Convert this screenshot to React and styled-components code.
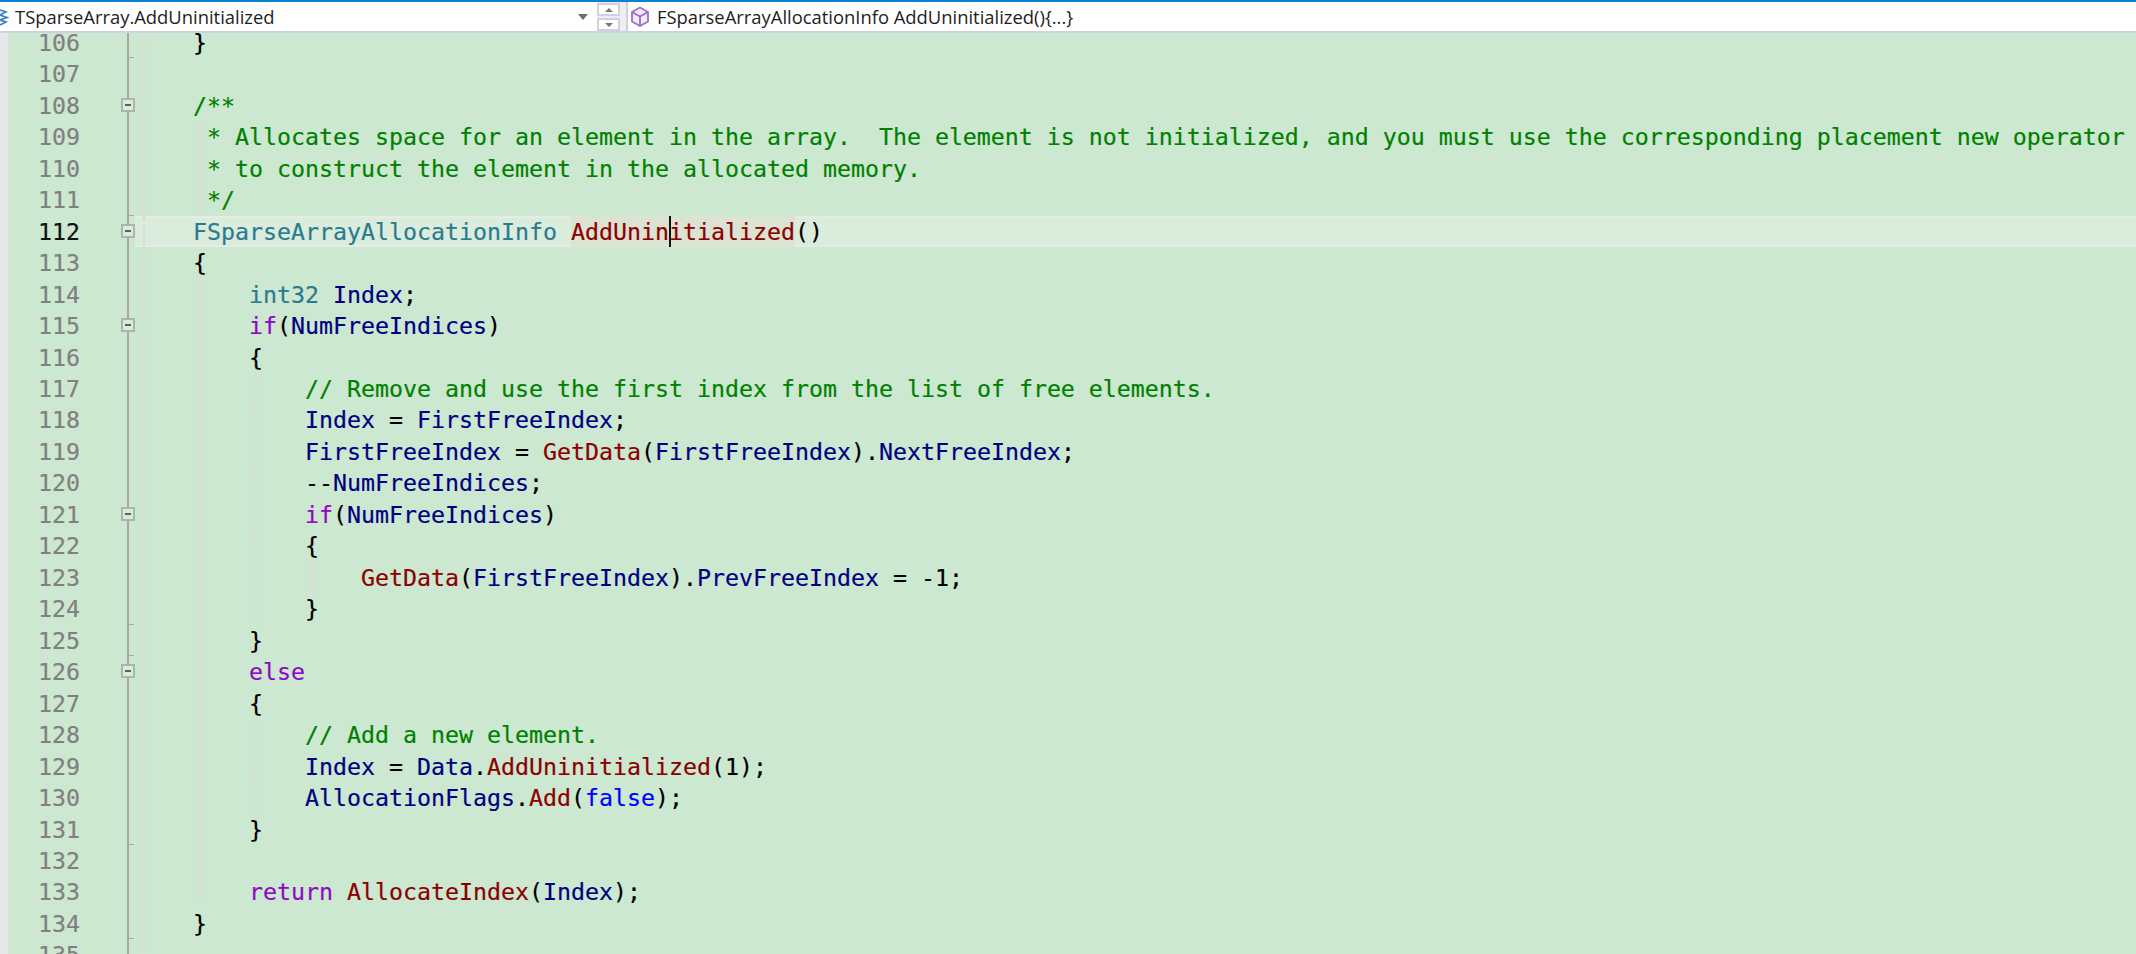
import React from "react";
import styled, { createGlobalStyle } from "styled-components";

const Global = createGlobalStyle`
  html, body { margin: 0; padding: 0; background: #cde8d0; overflow: hidden; }
`;

const Window = styled.div`
  display: flex;
  flex-direction: column;
  width: 2136px;
  height: 954px;
  overflow: hidden;
  border-top: 2px solid #0e7fd1;
  box-sizing: border-box;
`;

const NavBar = styled.div`
  display: flex;
  align-items: stretch;
  flex: 0 0 31px;
  box-sizing: border-box;
  background: #fff;
  border-bottom: 2px solid #cfd0e0;
  font-family: "Open Sans", "Noto Sans", sans-serif;
  font-size: 18.4px;
  color: #1e1e1e;
  position: relative;
  z-index: 2;
`;

const NavScope = styled.div`
  display: flex;
  align-items: center;
  flex: 0 0 ${(props) => props.width}px;
  gap: 6px;
  box-sizing: border-box;
  min-width: 0;
`;

const ScopeLabel = styled.span`
  flex: 1;
  white-space: nowrap;
`;

const Caret = styled.i`
  width: 0;
  height: 0;
  margin-right: 8px;
  border-left: 5px solid transparent;
  border-right: 5px solid transparent;
  border-top: 6px solid #6d6d6d;
`;

const Spinner = styled.div`
  display: flex;
  flex-direction: column;
  flex: 0 0 30px;
  box-sizing: border-box;
  gap: 2px;
  padding: 1px 6px 0 1px;
  background: linear-gradient(to right, #fff 1px, #eeeef2 1px);
`;

const SpinButton = styled.div`
  flex: 1;
  display: flex;
  align-items: center;
  justify-content: center;
  background: #fff;
  border: 2px solid #cfd0e0;
  &::after {
    content: "";
    border-left: 4px solid transparent;
    border-right: 4px solid transparent;
    border-${(props) => (props.down ? "top" : "bottom")}: 4px solid #777;
  }
`;

const MemberScope = styled(NavScope)`
  flex: 1;
  border-left: 2px solid #cfd0e0;
  padding-left: 3px;
  gap: 8px;
`;

const Editor = styled.div`
  flex: 1;
  min-height: 0;
  display: flex;
  overflow: hidden;
  background: #cde8d0;
`;

const SelectionMargin = styled.div`
  flex: 0 0 8px;
  background: #e6e7e8;
`;

const Lines = styled.div`
  flex: 1;
  min-width: 0;
  margin-top: -6.2px;
`;

const Row = styled.div`
  display: flex;
  height: 31.47px;
  box-sizing: border-box;
  font-family: "DejaVu Sans Mono", monospace;
  font-size: 23.25px;
  line-height: 31.47px;
  white-space: pre;
  -webkit-text-stroke: 0.2px currentColor;
`;

const LineNumber = styled.div`
  flex: 0 0 72px;
  text-align: right;
  color: ${(props) => (props.current ? "#111" : "#808080")};
`;

const FoldGutter = styled.div`
  flex: 0 0 57px;
  position: relative;
  &::before {
    content: "";
    position: absolute;
    left: 47px;
    top: 0;
    bottom: 0;
    border-left: 2px solid #a6a6a6;
  }
`;

const FoldBox = styled.div`
  position: absolute;
  z-index: 1;
  left: 41px;
  top: 8px;
  width: 14px;
  height: 14px;
  box-sizing: border-box;
  border: 2px solid #abb5ab;
  background: #d9ebdb;
  &::after {
    content: "";
    position: absolute;
    left: 2px;
    right: 2px;
    top: 4px;
    height: 2px;
    background: #5f5f5f;
  }
`;

const FoldEnd = styled.div`
  position: absolute;
  left: 47px;
  bottom: 0;
  width: 7px;
  height: 1px;
  background: #a6a6a6;
`;

const CodeCell = styled.div`
  flex: 1;
  min-width: 0;
  position: relative;
  overflow: hidden;
  padding-left: ${(props) => props.indent * 14}px;
  ${(props) =>
    props.current &&
    `
    margin-left: -2px;
    padding-left: ${props.indent * 14 + 2}px;
    background: #daeddc;
    box-shadow: inset 0 2px #e6ebe6, inset 0 -2px #e6ebe6;
  `}
`;

const Guide = styled.div`
  position: absolute;
  top: 0;
  bottom: 0;
  width: 2px;
  left: ${(props) => props.column * 14 + (props.shifted ? 8 : 6)}px;
  background: repeating-linear-gradient(to bottom, #ddd6de 0 6px, transparent 6px 8px);
`;

const Cursor = styled.div`
  position: absolute;
  top: 0;
  bottom: 0;
  left: 534px;
  width: 2px;
  background: #111;
`;

const Text = styled.span`
  color: ${(props) => props.color};
  position: relative;
`;

const MatchedText = styled(Text)`
  display: inline-block;
  background: #dde3d2;
`;

const C = {
  p: "#000000",
  c: "#008000",
  t: "#2b7a8f",
  f: "#8b0000",
  v: "#000080",
  k: "#8f08c4",
  b: "#0000ff",
};

// [number, indent, fold marker, guides, tokens]
const LINES = [
  [106, 4, "end", [0], [["p", "}"]]],
  [107, 0, null, [0], []],
  [108, 4, "box", [0], [["c", "/**"]]],
  [109, 5, null, [0, 4], [["c", "* Allocates space for an element in the array.  The element is not initialized, and you must use the corresponding placement new operator"]]],
  [110, 5, null, [0, 4], [["c", "* to construct the element in the allocated memory."]]],
  [111, 5, "end", [0, 4], [["c", "*/"]]],
  [112, 4, "box", [0], [["t", "FSparseArrayAllocationInfo"], ["p", " "], ["m", "AddUninitialized"], ["p", "()"]]],
  [113, 4, null, [0], [["p", "{"]]],
  [114, 8, null, [0, 4], [["t", "int32"], ["p", " "], ["v", "Index"], ["p", ";"]]],
  [115, 8, "box", [0, 4], [["k", "if"], ["p", "("], ["v", "NumFreeIndices"], ["p", ")"]]],
  [116, 8, null, [0, 4], [["p", "{"]]],
  [117, 12, null, [0, 4, 8], [["c", "// Remove and use the first index from the list of free elements."]]],
  [118, 12, null, [0, 4, 8], [["v", "Index"], ["p", " = "], ["v", "FirstFreeIndex"], ["p", ";"]]],
  [119, 12, null, [0, 4, 8], [["v", "FirstFreeIndex"], ["p", " = "], ["f", "GetData"], ["p", "("], ["v", "FirstFreeIndex"], ["p", ")."], ["v", "NextFreeIndex"], ["p", ";"]]],
  [120, 12, null, [0, 4, 8], [["p", "--"], ["v", "NumFreeIndices"], ["p", ";"]]],
  [121, 12, "box", [0, 4, 8], [["k", "if"], ["p", "("], ["v", "NumFreeIndices"], ["p", ")"]]],
  [122, 12, null, [0, 4, 8], [["p", "{"]]],
  [123, 16, null, [0, 4, 8, 12], [["f", "GetData"], ["p", "("], ["v", "FirstFreeIndex"], ["p", ")."], ["v", "PrevFreeIndex"], ["p", " = -1;"]]],
  [124, 12, "end", [0, 4, 8], [["p", "}"]]],
  [125, 8, "end", [0, 4], [["p", "}"]]],
  [126, 8, "box", [0, 4], [["k", "else"]]],
  [127, 8, null, [0, 4], [["p", "{"]]],
  [128, 12, null, [0, 4, 8], [["c", "// Add a new element."]]],
  [129, 12, null, [0, 4, 8], [["v", "Index"], ["p", " = "], ["v", "Data"], ["p", "."], ["f", "AddUninitialized"], ["p", "(1);"]]],
  [130, 12, null, [0, 4, 8], [["v", "AllocationFlags"], ["p", "."], ["f", "Add"], ["p", "("], ["b", "false"], ["p", ");"]]],
  [131, 8, "end", [0, 4], [["p", "}"]]],
  [132, 0, null, [0, 4], []],
  [133, 8, null, [0, 4], [["k", "return"], ["p", " "], ["f", "AllocateIndex"], ["p", "("], ["v", "Index"], ["p", ");"]]],
  [134, 4, "end", [0], [["p", "}"]]],
  [135, 0, null, [0], []],
];

function CubeIcon() {
  return (
    <svg width="18" height="21" viewBox="0 0 18 21" fill="none" stroke="#9b6fc9" strokeWidth="1.8">
      <path d="M9 1.500 17 6v9.500L9 20 1 15.500V6z" fill="#f1ebf8" />
      <path d="M1 6l8 4.500L17 6M9 10.500V20" />
    </svg>
  );
}

function ClassIcon() {
  return (
    <svg width="9" height="18" viewBox="0 0 9 18" fill="none" stroke="#3f7fc4" strokeWidth="1.7">
      <path d="M0 2 6 4 0 7M0 7l7 2.500L0 12M0 12l6 2-6 3" />
    </svg>
  );
}

function CodeLine({ line }) {
  const [number, indent, fold, guides, tokens] = line;
  const current = number === 112;
  return (
    <Row>
      <LineNumber current={current}>{number}</LineNumber>
      <FoldGutter>
        {fold === "box" && <FoldBox />}
        {fold === "end" && <FoldEnd />}
      </FoldGutter>
      <CodeCell indent={indent} current={current}>
        {guides.map((column) => (
          <Guide key={column} column={column} shifted={current} />
        ))}
        {tokens.map(([kind, value], i) =>
          kind === "m" ? (
            <MatchedText key={i} color={C.f}>
              {value}
            </MatchedText>
          ) : (
            <Text key={i} color={C[kind]}>
              {value}
            </Text>
          )
        )}
        {current && <Cursor />}
      </CodeCell>
    </Row>
  );
}

export default function App() {
  return (
    <Window>
      <Global />
      <NavBar>
        <NavScope width={596}>
          <ClassIcon />
          <ScopeLabel>TSparseArray.AddUninitialized</ScopeLabel>
          <Caret />
        </NavScope>
        <Spinner>
          <SpinButton />
          <SpinButton down />
        </Spinner>
        <MemberScope>
          <CubeIcon />
          <span>FSparseArrayAllocationInfo AddUninitialized(){"{...}"}</span>
        </MemberScope>
      </NavBar>
      <Editor>
        <SelectionMargin />
        <Lines>
          {LINES.map((line) => (
            <CodeLine key={line[0]} line={line} />
          ))}
        </Lines>
      </Editor>
    </Window>
  );
}
